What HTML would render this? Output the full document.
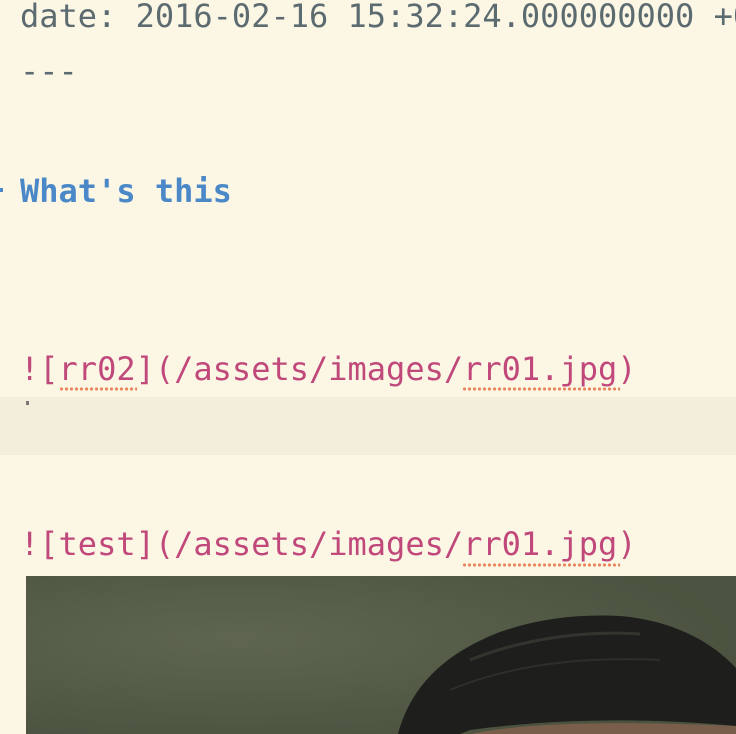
<!DOCTYPE html>
<html><head><meta charset="utf-8"><style>
html,body{margin:0;padding:0;width:736px;height:734px;overflow:hidden;background:#fcf6e5}
.l{position:absolute;left:20px;white-space:pre;font-family:"DejaVu Sans Mono","Liberation Mono",monospace;font-size:32px;line-height:40px}
.sq{position:absolute;height:4px;background:radial-gradient(circle,#e8845a 1.4px,transparent 1.8px) 0 0/5px 4px repeat-x}
</style></head><body>
<div style="position:absolute;left:0;top:0;width:736px;height:734px;overflow:hidden">
<div class="l" style="top:-4px;color:#5c6b70">date: 2016-02-16 15:32:24.000000000 +0</div>
<div class="l" style="top:51px;color:#5c6b70">---</div>
<div style="position:absolute;left:0;top:188px;width:3px;height:4px;background:#4a88c8"></div>
<div class="l" style="top:171px;color:#4a88c8;font-weight:bold">What's this</div>
<div style="position:absolute;left:0;top:397px;width:736px;height:58px;background:#f3eddc"></div>
<div style="position:absolute;left:26px;top:401px;width:3px;height:4px;background:#777"></div>
<div class="l" style="top:349px;color:#c0487a">![rr02](/assets/images/rr01.jpg)</div>
<div class="sq" style="left:59px;top:387px;width:78px"></div>
<div class="sq" style="left:462px;top:387px;width:158px"></div>
<div class="l" style="top:524px;color:#c0487a">![test](/assets/images/rr01.jpg)</div>
<div class="sq" style="left:462px;top:563px;width:158px"></div>
<svg style="position:absolute;left:26px;top:576px" width="710" height="158" viewBox="26 576 710 158">
<defs><radialGradient id="g" cx="0.3" cy="0.4" r="0.7"><stop offset="0" stop-color="#5e6550"/><stop offset="1" stop-color="#4b5340"/></radialGradient></defs>
<rect x="26" y="576" width="710" height="158" fill="url(#g)"/>
<path d="M470 734 C520 724 600 720 736 726 L736 734 Z" fill="#7a5e4c"/>
<path d="M398 734 C410 690 440 655 500 632 C540 618 580 614 620 616 C670 620 710 640 736 668 L736 726 C650 718 560 718 470 730 L460 734 Z" fill="#1e1e1c"/>
<path d="M470 660 C520 640 580 630 640 634" stroke="#34342f" stroke-width="3" fill="none"/>
<path d="M450 690 C510 665 580 656 660 660" stroke="#2e2e2b" stroke-width="2" fill="none"/>
</svg>
</div>
</body></html>
